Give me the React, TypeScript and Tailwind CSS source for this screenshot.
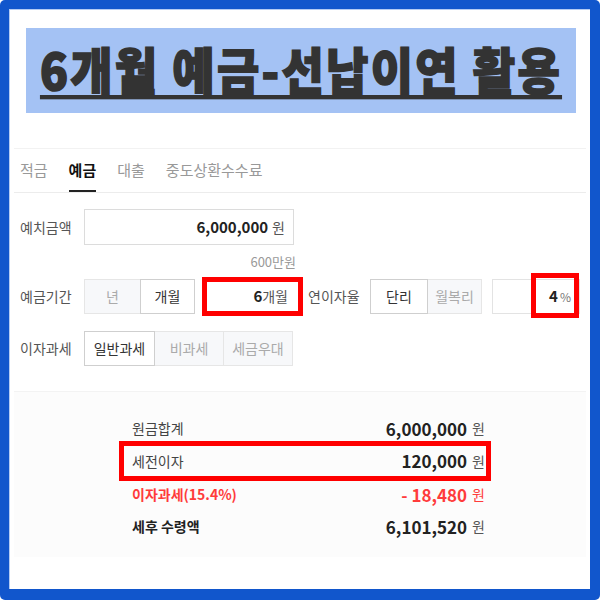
import React from 'react';

const font = { fontFamily: '"Noto Sans CJK KR", "Noto Sans", sans-serif' };

function Seg({ label, active, w }: { label: string; active?: boolean; w: string }) {
  return (
    <div
      className={`${w} h-full flex items-center justify-center text-[14px] border ${
        active ? 'bg-white text-[#333] border-[#cfcfcf] z-10' : 'bg-[#f7f8fa] text-[#aaa] border-[#e6e6e6]'
      } -ml-px first:ml-0`}
    >
      {label}
    </div>
  );
}

export default function App() {
  return (
    <div style={font} className="w-[600px] h-[600px] rounded-[5px] bg-[#1156cc] pt-[9px] pl-[9px] pr-[10px] pb-[11px]">
      <div className="h-full bg-white border-l border-t border-[#b3cbf3] flex flex-col">
        {/* TITLE BANNER */}
        <div className="ml-[16px] mt-[18px] w-[550px] h-[85px] bg-[#a4c2f4] flex items-center justify-center pb-[6px]">
          <span className="text-[46px] leading-none font-black text-[#333] tracking-[2.3px] [-webkit-text-stroke:1.5px_#333] underline decoration-[4px] underline-offset-[5px] scale-y-[1.08]">
            6개월 예금-선납이연 활용
          </span>
        </div>

        {/* TABS */}
        <div className="mx-[4px] mt-[35px] border-t border-[#f2f2f2] border-b border-b-[#ececec] h-[45px] flex items-stretch pl-[6px] gap-[21px] text-[15px]">
          <div className="flex items-center text-[#999]">적금</div>
          <div className="flex items-center font-bold text-[#111] border-b-2 border-[#222] pt-[2px]">예금</div>
          <div className="flex items-center text-[#999]">대출</div>
          <div className="flex items-center text-[#999]">중도상환수수료</div>
        </div>

        {/* FORM */}
        <div className="mx-[4px] pl-[6px] pt-[16px] text-[14px] text-[#555]">
          <div className="flex items-center h-[36px]">
            <div className="w-[64px]">예치금액</div>
            <div className="w-[210px] h-full border border-[#dcdcdc] flex items-center justify-end pr-[8px] gap-[4px]">
              <span className="text-[15px] font-bold text-[#222]">6,000,000</span>
              <span className="text-[#555]">원</span>
            </div>
          </div>
          <div className="w-[276px] text-right text-[13px] text-[#999] h-[34px] flex items-center justify-end">600만원</div>

          <div className="flex items-center h-[35px]">
            <div className="w-[64px]">예금기간</div>
            <div className="flex h-full">
              <Seg label="년" w="w-[57px]" />
              <Seg label="개월" active w="w-[55px]" />
            </div>
            <div className="ml-[7px] w-[101px] h-[39px] border-[5px] border-[#ff0000] flex items-center justify-end pr-[10px]">
              <span className="text-[15px] font-bold text-[#222]">6</span>
              <span className="text-[#555]">개월</span>
            </div>
            <div className="ml-[5px] w-[62px]">연이자율</div>
            <div className="flex h-full">
              <Seg label="단리" active w="w-[58px]" />
              <Seg label="월복리" w="w-[55px]" />
            </div>
            <div className="ml-[10px] w-[88px] h-full border border-[#e3e3e3] relative flex items-center justify-end pr-[8px] gap-[2px]">
              <span className="text-[15px] font-bold text-[#222]">4</span>
              <span className="text-[12px] text-[#777]">%</span>
              <div className="absolute right-0 top-[-7px] w-[48px] h-[45px] border-[5px] border-[#ff0000]" />
            </div>
          </div>

          <div className="flex items-center h-[35px] mt-[17px]">
            <div className="w-[64px]">이자과세</div>
            <div className="flex h-full">
              <Seg label="일반과세" active w="w-[71px]" />
              <Seg label="비과세" w="w-[70px]" />
              <Seg label="세금우대" w="w-[70px]" />
            </div>
          </div>
        </div>

        {/* RESULT */}
        <div className="mx-[4px] mt-[25px] h-[166px] bg-[#fcfcfc] border-t border-[#f3f3f3] pt-[20px] pl-[105px] pr-[95px]">
          <div className="flex items-center justify-between h-[33px] pl-[13px] pr-[6px]">
            <span className="text-[14px] text-[#444]">원금합계</span>
            <span className="flex items-center gap-[5px]">
              <span className="text-[17px] font-bold text-[#222]">6,000,000</span>
              <span className="text-[14px] text-[#555]">원</span>
            </span>
          </div>
          <div className="flex items-center justify-between h-[40px] pl-[8px] pr-[1px] border-[5px] border-[#ff0000] -mb-[6px] -mt-[4px]">
            <span className="text-[14px] text-[#444]">세전이자</span>
            <span className="flex items-center gap-[5px]">
              <span className="text-[17px] font-bold text-[#222]">120,000</span>
              <span className="text-[14px] text-[#555]">원</span>
            </span>
          </div>
          <div className="flex items-center justify-between h-[33px] pl-[13px] pr-[6px] mt-[3px]">
            <span className="text-[14px] font-bold text-[#ff3b3b]">이자과세(15.4%)</span>
            <span className="flex items-center gap-[5px] text-[#ff3b3b]">
              <span className="text-[17px] font-bold">- 18,480</span>
              <span className="text-[14px]">원</span>
            </span>
          </div>
          <div className="flex items-center justify-between h-[31px] pl-[13px] pr-[6px]">
            <span className="text-[14px] font-bold text-[#222]">세후 수령액</span>
            <span className="flex items-center gap-[5px]">
              <span className="text-[17px] font-bold text-[#222]">6,101,520</span>
              <span className="text-[14px] text-[#555]">원</span>
            </span>
          </div>
        </div>
      </div>
    </div>
  );
}
